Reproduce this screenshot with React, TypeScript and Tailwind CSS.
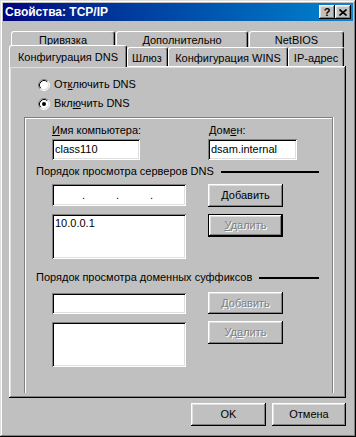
const raised = 'shadow-[inset_-1px_-1px_#000,inset_1px_1px_#fff,inset_-2px_-2px_#808080,inset_2px_2px_#dfdfdf]';
const sunken = 'shadow-[inset_1px_1px_#808080,inset_-1px_-1px_#fff,inset_2px_2px_#000,inset_-2px_-2px_#dfdfdf]';
const disabledText = 'text-[#808080] [text-shadow:1px_1px_0_#fff]';

function Radio({ checked }: { checked?: boolean }) {
  return (
    <svg width="12" height="12" viewBox="0 0 12 12" className="shrink-0">
      <circle cx="6" cy="6" r="5" fill="#fff" />
      <path d="M2.11 9.89A5.5 5.5 0 0 1 9.89 2.11" fill="none" stroke="#808080" />
      <path d="M9.89 2.11A5.5 5.5 0 0 1 2.11 9.89" fill="none" stroke="#fff" />
      <path d="M2.82 9.18A4.5 4.5 0 0 1 9.18 2.82" fill="none" stroke="#000" />
      <path d="M9.18 2.82A4.5 4.5 0 0 1 2.82 9.18" fill="none" stroke="#dfdfdf" />
      {checked && <circle cx="6" cy="6" r="2" fill="#000" />}
    </svg>
  );
}

function Tab({ className, children }: { className: string; children: React.ReactNode }) {
  return (
    <div
      className={`flex items-center justify-center border-t border-l border-r border-white border-r-black rounded-tl-[3px] rounded-tr-[3px] shadow-[inset_-1px_0_#808080] bg-[#c0c0c0] pt-[2px] overflow-hidden whitespace-nowrap ${className}`}
    >
      {children}
    </div>
  );
}

function Button({ className, disabled, children }: { className: string; disabled?: boolean; children: React.ReactNode }) {
  return (
    <div className={`flex items-center justify-center bg-[#c0c0c0] ${raised} ${disabled ? disabledText : ''} ${className}`}>
      {children}
    </div>
  );
}

export default function App() {
  return (
    <div className="flex h-[437px] w-[356px] flex-col bg-[#c0c0c0] p-[3px] font-['Liberation_Sans',Arial,sans-serif] text-[11px] leading-[13px] text-black shadow-[inset_-1px_-1px_#000,inset_1px_1px_#dfdfdf,inset_-2px_-2px_#808080,inset_2px_2px_#fff]">
      {/* title bar */}
      <div className="flex h-[18px] items-center bg-gradient-to-r from-[#000080] to-[#1084d0] px-[2px]">
        <span className="text-[12px] font-bold text-white">Свойства: TCP/IP</span>
        <div className="ml-auto flex">
          <div className={`flex h-[14px] w-[16px] items-center justify-center bg-[#c0c0c0] text-[11px] font-bold leading-none ${raised}`}>?</div>
          <div className={`flex h-[14px] w-[16px] items-center justify-center bg-[#c0c0c0] ${raised}`}>
            <svg width="8" height="7" viewBox="0 0 8 7">
              <path d="M0.5 0.5L7.5 6.5M7.5 0.5L0.5 6.5" stroke="#000" strokeWidth="1.6" />
            </svg>
          </div>
        </div>
      </div>

      <div className="ml-[6px] w-[337px]">
        {/* tabs */}
        <div className="mt-[10px] flex gap-px pl-[2px]">
          <Tab className="h-[16px] w-[104px]">Привязка</Tab>
          <Tab className="h-[16px] w-[132px]">Дополнительно</Tab>
          <Tab className="h-[16px] w-[95px]">NetBIOS</Tab>
        </div>
        <div className="flex h-[19px] items-end">
          <Tab className="relative z-10 -mb-px h-[22px] w-[118px]">Конфигурация DNS</Tab>
          <Tab className="h-[19px] w-[41px] !justify-start pl-[4px]">Шлюз</Tab>
          <Tab className="h-[19px] w-[120px]">Конфигурация WINS</Tab>
          <Tab className="h-[19px] w-[56px]">IP-адрес</Tab>
        </div>

        {/* panel */}
        <div className={`flex h-[332px] flex-col pt-[9px] ${raised}`}>
          <div className="flex h-[19px] items-center gap-[4px] pl-[29px]">
            <Radio />
            <span>От<span className="underline">к</span>лючить DNS</span>
          </div>
          <div className="flex h-[19px] items-center gap-[4px] pl-[29px]">
            <Radio checked />
            <span>Вкл<span className="underline">ю</span>чить DNS</span>
          </div>

          <div className="mt-[4px] ml-[15px] h-[276px] w-[309px] border-t border-l border-r border-[#808080] pt-[6px] shadow-[inset_1px_1px_#fff,1px_0_0_#fff]">
            <div className="flex gap-[68px] pl-[27px]">
              <div className="flex w-[88px] flex-col">
                <span className="h-[13px] whitespace-nowrap"><span className="underline">И</span>мя компьютера:</span>
                <div className={`mt-[2px] flex h-[21px] items-center bg-white pl-[3px] ${sunken}`}>class110</div>
              </div>
              <div className="flex w-[89px] flex-col">
                <span className="h-[13px] whitespace-nowrap pl-px">Дом<span className="underline">е</span>н:</span>
                <div className={`mt-[2px] flex h-[21px] items-center bg-white pl-[3px] ${sunken}`}>dsam.internal</div>
              </div>
            </div>

            <div className="mt-[5px] flex h-[13px] items-center pl-[11px] pr-[13px]">
              <span className="whitespace-nowrap">Порядок просмотра серверов DNS</span>
              <div className="ml-[7px] h-[2px] flex-1 bg-black" />
            </div>

            <div className="mt-[6px] flex gap-[22px] pl-[27px]">
              <div className="flex w-[134px] flex-col gap-[8px]">
                <div className={`flex h-[22px] items-center gap-[31px] bg-white pl-[30px] ${sunken}`}>
                  <span className="w-[3px]">.</span>
                  <span className="w-[3px]">.</span>
                  <span className="w-[3px]">.</span>
                </div>
                <div className={`h-[45px] bg-white pl-[3px] pt-[3px] ${sunken}`}>10.0.0.1</div>
              </div>
              <div className="flex flex-col gap-[7px]">
                <Button className="h-[23px] w-[75px]"><span><span className="underline">Д</span>обавить</span></Button>
                <div className="h-[23px] w-[75px] border border-black">
                  <Button disabled className="h-full w-full"><span><span className="underline">У</span>далить</span></Button>
                </div>
              </div>
            </div>

            <div className="mt-[12px] flex h-[13px] items-center pl-[11px] pr-[13px]">
              <span className="whitespace-nowrap">Порядок просмотра доменных суффиксов</span>
              <div className="ml-[7px] h-[2px] flex-1 bg-black" />
            </div>

            <div className="mt-[8px] flex gap-[22px] pl-[27px]">
              <div className="mt-px flex w-[134px] flex-col gap-[8px]">
                <div className={`h-[21px] bg-white ${sunken}`} />
                <div className={`h-[45px] bg-white ${sunken}`} />
              </div>
              <div className="flex flex-col gap-[7px]">
                <Button disabled className="h-[22px] w-[75px]"><span><span className="underline">Д</span>обавить</span></Button>
                <Button disabled className="h-[23px] w-[75px]"><span>Уд<span className="underline">а</span>лить</span></Button>
              </div>
            </div>
          </div>
        </div>

        {/* dialog buttons */}
        <div className="mt-[5px] flex justify-end gap-[6px]">
          <Button className="h-[23px] w-[75px]">OK</Button>
          <Button className="h-[23px] w-[74px]">Отмена</Button>
        </div>
      </div>
    </div>
  );
}
